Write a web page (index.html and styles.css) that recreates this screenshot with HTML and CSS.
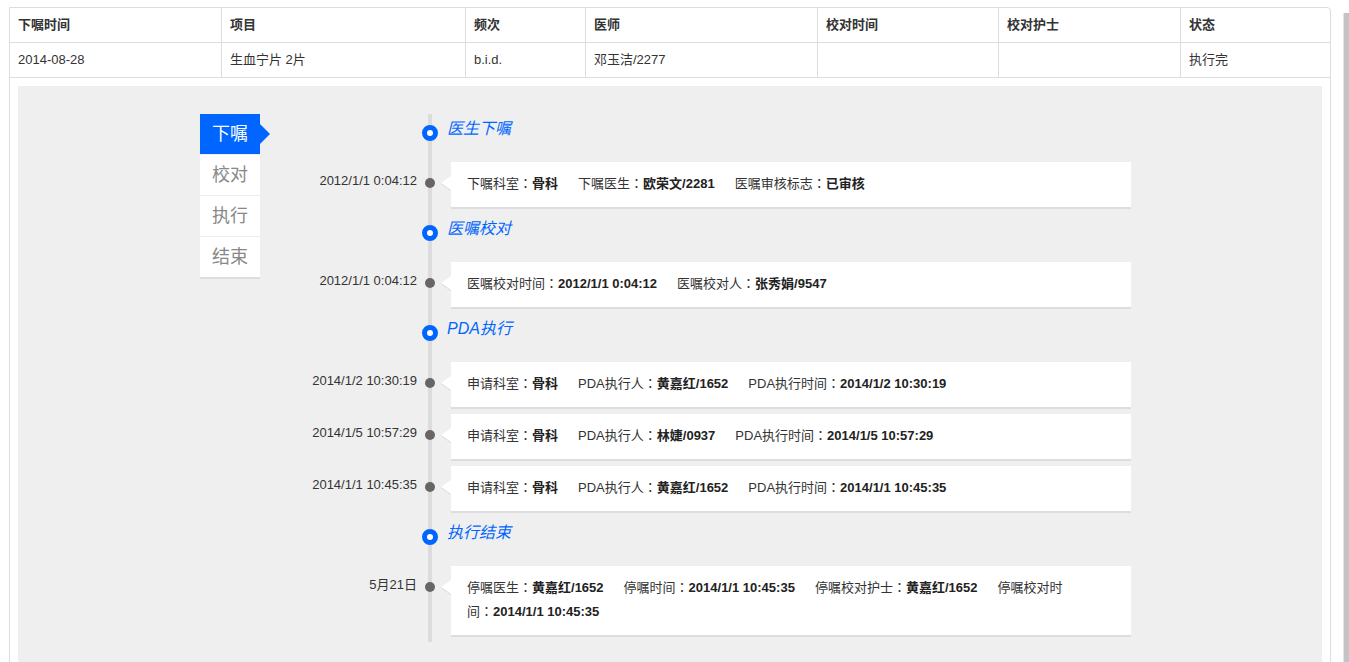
FILE: index.html
```html
<!DOCTYPE html>
<html>
<head>
<meta charset="utf-8">
<title>医嘱执行</title>
<link rel="stylesheet" href="styles.css">
</head>
<body>
<div class="grid-wrap">
  <table class="orders">
    <colgroup>
      <col class="w1"><col class="w2"><col class="w3"><col class="w4"><col class="w5"><col class="w6"><col class="w7">
    </colgroup>
    <thead>
      <tr><th>下嘱时间</th><th>项目</th><th>频次</th><th>医师</th><th>校对时间</th><th>校对护士</th><th>状态</th></tr>
    </thead>
    <tbody>
      <tr><td>2014-08-28</td><td>生血宁片 2片</td><td>b.i.d.</td><td>邓玉洁/2277</td><td></td><td></td><td>执行完</td></tr>
      <tr class="detail-row">
        <td colspan="7">
          <div class="detail">
            <ul class="steps">
              <li class="step active">下嘱</li>
              <li class="step">校对</li>
              <li class="step">执行</li>
              <li class="step last">结束</li>
            </ul>
            <div class="timeline">
              <div class="tl-title first"><span class="ring"></span><span class="tl-name">医生下嘱</span></div>
              <div class="tl-entry">
                <div class="tl-date">2012/1/1 0:04:12</div>
                <div class="tl-axis"><span class="dot"></span></div>
                <div class="tl-card"><span class="kv">下嘱科室<span class="colon">：</span><b>骨科</b></span><span class="kv">下嘱医生<span class="colon">：</span><b>欧荣文/2281</b></span><span class="kv">医嘱审核标志<span class="colon">：</span><b>已审核</b></span></div>
              </div>

              <div class="tl-title"><span class="ring"></span><span class="tl-name">医嘱校对</span></div>
              <div class="tl-entry">
                <div class="tl-date">2012/1/1 0:04:12</div>
                <div class="tl-axis"><span class="dot"></span></div>
                <div class="tl-card"><span class="kv">医嘱校对时间<span class="colon">：</span><b>2012/1/1 0:04:12</b></span><span class="kv">医嘱校对人<span class="colon">：</span><b>张秀娟/9547</b></span></div>
              </div>

              <div class="tl-title"><span class="ring"></span><span class="tl-name">PDA执行</span></div>
              <div class="tl-entry">
                <div class="tl-date">2014/1/2 10:30:19</div>
                <div class="tl-axis"><span class="dot"></span></div>
                <div class="tl-card"><span class="kv">申请科室<span class="colon">：</span><b>骨科</b></span><span class="kv">PDA执行人<span class="colon">：</span><b>黄嘉红/1652</b></span><span class="kv">PDA执行时间<span class="colon">：</span><b>2014/1/2 10:30:19</b></span></div>
              </div>
              <div class="tl-entry next">
                <div class="tl-date">2014/1/5 10:57:29</div>
                <div class="tl-axis"><span class="dot"></span></div>
                <div class="tl-card"><span class="kv">申请科室<span class="colon">：</span><b>骨科</b></span><span class="kv">PDA执行人<span class="colon">：</span><b>林婕/0937</b></span><span class="kv">PDA执行时间<span class="colon">：</span><b>2014/1/5 10:57:29</b></span></div>
              </div>
              <div class="tl-entry next">
                <div class="tl-date">2014/1/1 10:45:35</div>
                <div class="tl-axis"><span class="dot"></span></div>
                <div class="tl-card"><span class="kv">申请科室<span class="colon">：</span><b>骨科</b></span><span class="kv">PDA执行人<span class="colon">：</span><b>黄嘉红/1652</b></span><span class="kv">PDA执行时间<span class="colon">：</span><b>2014/1/1 10:45:35</b></span></div>
              </div>

              <div class="tl-title"><span class="ring"></span><span class="tl-name">执行结束</span></div>
              <div class="tl-entry">
                <div class="tl-date">5月21日</div>
                <div class="tl-axis"><span class="dot"></span></div>
                <div class="tl-card"><span class="kv">停嘱医生<span class="colon">：</span><b>黄嘉红/1652</b></span><span class="kv">停嘱时间<span class="colon">：</span><b>2014/1/1 10:45:35</b></span><span class="kv">停嘱校对护士<span class="colon">：</span><b>黄嘉红/1652</b></span><span class="kv">停嘱校对时间<span class="colon">：</span><b>2014/1/1 10:45:35</b></span></div>
              </div>
            </div>
          </div>
        </td>
      </tr>
    </tbody>
  </table>
</div>
<div class="scrollbar"></div>
</body>
</html>
```

FILE: styles.css
```css
html, body {
  margin: 0;
  padding: 0;
  overflow: hidden;
  background: #fff;
}
body {
  font-family: "Liberation Sans", Arial, "Noto Sans CJK SC", sans-serif;
  font-size: 13px;
  color: #333;
}
.grid-wrap {
  box-sizing: border-box;
  width: 1322px;
  margin: 7px 0 0 9px;
  border: 1px solid #ddd;
  border-top-right-radius: 4px;
  overflow: hidden;
}
.orders {
  width: 1320px;
  table-layout: fixed;
  border-collapse: separate;
  border-spacing: 0;
}
.w1 { width: 212px; }
.w2 { width: 244px; }
.w3 { width: 120px; }
.w4 { width: 232px; }
.w5 { width: 181px; }
.w6 { width: 182px; }
.w7 { width: 149px; }
.orders th,
.orders td {
  box-sizing: border-box;
  padding: 8px;
  line-height: 18px;
  text-align: left;
  vertical-align: top;
  border-right: 1px solid #ddd;
  border-bottom: 1px solid #ddd;
  white-space: nowrap;
}
.orders th {
  font-weight: 700;
  color: #333;
}
.orders th:last-child,
.orders td:last-child {
  border-right: none;
}
.orders .detail-row td {
  border-bottom: none;
  white-space: normal;
}
.detail {
  display: flex;
  align-items: flex-start;
  background: #efefef;
  padding: 28px 0 40px 182px;
}
.steps {
  list-style: none;
  margin: 0;
  padding: 0;
  width: 60px;
  border-bottom: 2px solid #ddd;
}
.step {
  position: relative;
  height: 40px;
  line-height: 40px;
  margin-bottom: 1px;
  background: #fff;
  color: #888;
  font-size: 18px;
  text-align: center;
}
.step.last {
  margin-bottom: 0;
}
.step.active {
  background: #0066ff;
  color: #fff;
}
.step.active::after {
  content: "";
  position: absolute;
  right: -10px;
  top: 10px;
  border-left: 10px solid #0066ff;
  border-top: 10px solid transparent;
  border-bottom: 10px solid transparent;
}
.timeline {
  width: 851px;
  margin-left: 20px;
  padding-bottom: 5px;
  background: linear-gradient(#dcdcdc, #dcdcdc) no-repeat 148px 0 / 4px 100%;
}
.tl-title {
  display: flex;
  align-items: flex-start;
  height: 28px;
  margin-top: 10px;
  padding-left: 142px;
}
.tl-title.first {
  margin-top: 5px;
}
.ring {
  box-sizing: border-box;
  width: 16px;
  height: 16px;
  margin-top: 6px;
  border: 5px solid #0066ff;
  border-radius: 50%;
  background: #fff;
}
.tl-name {
  margin-left: 9px;
  font-size: 16px;
  line-height: 20px;
  font-style: italic;
  color: #0066ff;
}
.tl-entry {
  display: grid;
  grid-template-columns: 137px 34px 680px;
  margin-top: 15px;
}
.tl-entry.next {
  margin-top: 5px;
}
.tl-date {
  text-align: right;
  padding-top: 12px;
  line-height: 14px;
  color: #333;
  white-space: nowrap;
}
.tl-axis {
  position: relative;
}
.dot {
  display: block;
  width: 10px;
  height: 10px;
  margin: 16px 0 0 8px;
  border-radius: 50%;
  background: #666;
}
.tl-card {
  position: relative;
  background: #fff;
  border-bottom: 2px solid #ddd;
  padding: 10px 66px 11px 16px;
  line-height: 24px;
  color: #333;
}
.tl-card::before,
.tl-card::after {
  content: "";
  position: absolute;
  left: -10px;
  top: 14px;
  border-right: 10px solid #fff;
  border-top: 7px solid transparent;
  border-bottom: 7px solid transparent;
}
.tl-card::before {
  top: 15px;
  border-right-color: #dadada;
}
.kv {
  margin-right: 20px;
}
.colon {
  font-family: "Noto Sans CJK JP", "Noto Sans CJK TC", sans-serif;
  line-height: 0;
}
.kv b {
  font-weight: 700;
  color: #222;
}
.scrollbar {
  position: fixed;
  top: 13px;
  right: 0;
  bottom: 0;
  width: 5px;
  background: #c4c4c4;
  border-left: 1px solid #e4e4e4;
}
```
